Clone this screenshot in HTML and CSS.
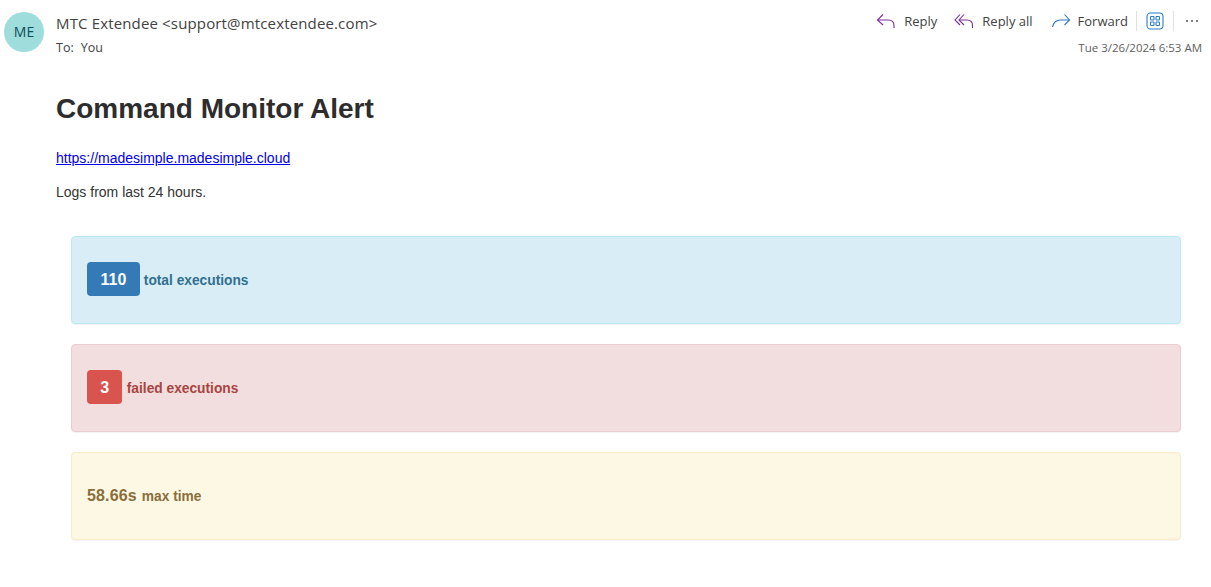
FILE: index.html
```html
<!DOCTYPE html>
<html lang="en">
<head>
    <meta charset="UTF-8">
    <title>Command Monitor Alert</title>
    <link rel="stylesheet" href="styles.css">
</head>
<body>

<!-- Message header -->
<header class="mail-header">
    <div class="avatar">ME</div>
    <div class="sender">
        <div class="sender-name">MTC Extendee &lt;support@mtcextendee.com&gt;</div>
        <div class="sender-to"><span class="to-label">To:</span>You</div>
    </div>
    <div class="header-right">
        <div class="actions">
            <button class="action">
                <svg class="action-icon" viewBox="0 0 20 20" fill="none" stroke="#7b2d9b" stroke-width="1.1">
                    <path d="M7 3.500 1.500 9l5.500 5"/>
                    <path d="M1.500 9H12c3.500 0 6 2 6 5.500V17"/>
                </svg>
                Reply
            </button>
            <button class="action action-all">
                <svg class="action-icon" viewBox="0 0 20 20" fill="none" stroke="#7b2d9b" stroke-width="1.1">
                    <path d="M6 3.500 1 9l5 5"/>
                    <path d="M10 3.500 5 9l5 5"/>
                    <path d="M5 9h8c3.500 0 5.500 2 5.500 5.500V17"/>
                </svg>
                Reply all
            </button>
            <button class="action action-last">
                <svg class="action-icon" viewBox="0 0 20 20" fill="none" stroke="#2f74c6" stroke-width="1.1">
                    <path d="M13.500 3.500 18.500 9l-5 5"/>
                    <path d="M18.500 9H9.500C5 9 2.500 11.500 1.500 16"/>
                </svg>
                Forward
            </button>
            <span class="divider"></span>
            <button class="icon-btn">
                <svg width="18" height="18" viewBox="0 0 18 18" fill="none" stroke="#2b7cc4" stroke-width="1.1">
                    <rect x="1" y="1" width="16" height="16" rx="3.500"/>
                    <rect x="4.500" y="4.500" width="3.500" height="3.500" rx=".7"/>
                    <rect x="10" y="4.500" width="3.500" height="3.500" rx=".7"/>
                    <rect x="4.500" y="10" width="3.500" height="3.500" rx=".7"/>
                    <rect x="10" y="10" width="3.500" height="3.500" rx=".7"/>
                </svg>
            </button>
            <span class="divider"></span>
            <button class="icon-btn more">
                <svg width="14" height="4" viewBox="0 0 14 4" fill="#616161">
                    <circle cx="2" cy="2" r="1.100"/>
                    <circle cx="7" cy="2" r="1.100"/>
                    <circle cx="12" cy="2" r="1.100"/>
                </svg>
            </button>
        </div>
        <div class="mail-date">Tue 3/26/2024 6:53 AM</div>
    </div>
</header>

<!-- Message body -->
<main class="mail-body">
    <h1>Command Monitor Alert</h1>
    <p class="site-link"><a href="https://madesimple.madesimple.cloud">https://madesimple.madesimple.cloud</a></p>
    <p class="intro">Logs from last 24 hours.</p>

    <div class="alerts">
        <div class="alert alert-info">
            <span class="badge badge-blue">110</span>
            <span class="alert-text">total executions</span>
        </div>
        <div class="alert alert-danger">
            <span class="badge badge-red">3</span>
            <span class="alert-text">failed executions</span>
        </div>
        <div class="alert alert-warning">
            <span class="alert-value">58.66s</span>
            <span class="alert-text">max time</span>
        </div>
    </div>
</main>

</body>
</html>
```

FILE: styles.css
```css
body {
    font-family: "Open Sans", "Noto Sans", sans-serif;
    background-color: #fff;
    margin: 0;
    padding: 0;
    color: #424242;
}
.mail-header {
    display: flex;
    padding: 12px 9px 0 4px;
}
.avatar {
    width: 40px;
    height: 40px;
    border-radius: 50%;
    background-color: #9fdcdc;
    color: #0e4d58;
    font-size: 14px;
    line-height: 40px;
    text-align: center;
    flex-shrink: 0;
}
.sender {
    margin-left: 12px;
    flex: 1;
}
.sender-name {
    font-size: 15px;
    letter-spacing: 0.15px;
    line-height: 24px;
    margin-top: -1px;
}
.sender-to {
    font-size: 12.500px;
    line-height: 22px;
    margin-top: 2px;
}
.to-label {
    margin-right: 7px;
}
.header-right {
    display: flex;
    flex-direction: column;
    align-items: flex-end;
    margin-top: -5px;
}
.actions {
    display: flex;
    align-items: center;
    height: 28px;
}
.action, .icon-btn {
    display: flex;
    align-items: center;
    background: none;
    border: none;
    padding: 0;
    font-family: inherit;
    font-size: 13px;
    color: #424242;
}
.action {
    margin-right: 17px;
}
.action-all {
    margin-right: 18px;
}
.action-last {
    margin-right: 8px;
}
.action-icon {
    width: 20px;
    height: 20px;
    margin-right: 8px;
}
.action-last .action-icon {
    margin-right: 7px;
}
.icon-btn {
    margin: 0 9px;
}
.icon-btn.more {
    margin-right: 3px;
    margin-left: 11px;
}
.divider {
    width: 1px;
    height: 20px;
    background-color: #e0e0e0;
}
.mail-date {
    font-size: 11.500px;
    line-height: 16px;
    margin-top: 5px;
    color: #616161;
}
.mail-body {
    padding: 0 30px 0 56px;
    font-family: "Liberation Sans", Arial, sans-serif;
    color: #333;
}
h1 {
    font-size: 28px;
    line-height: 31px;
    margin: 34px 0 0;
    color: #2d2d2d;
}
p {
    font-size: 14px;
    line-height: 20px;
    margin: 0;
}
.site-link {
    margin-top: 24px;
}
.site-link a {
    color: #0000ee;
}
.intro {
    margin-top: 14px;
}
.alerts {
    margin: 34px 0 0 15px;
}
.alert {
    display: flex;
    align-items: center;
    height: 88px;
    box-sizing: border-box;
    padding: 0 15px;
    margin-bottom: 20px;
    border: 1px solid transparent;
    border-radius: 4px;
    box-shadow: 0 1px 1px rgba(0, 0, 0, 0.05);
    font-size: 13.750px;
    font-weight: bold;
}
.alert-info {
    background-color: #d9edf7;
    border-color: #bce8f1;
    color: #31708f;
}
.alert-danger {
    background-color: #f2dede;
    border-color: #ebccd1;
    color: #a94442;
}
.alert-warning {
    background-color: #fcf8e3;
    border-color: #faebcc;
    color: #8a6d3b;
}
.badge {
    display: block;
    height: 34px;
    line-height: 35px;
    padding: 0 13.200px;
    margin: 0 4.500px 2px 0;
    border-radius: 4px;
    color: #fff;
    font-size: 16px;
}
.badge-blue {
    background-color: #337ab7;
    padding: 0 13.500px;
    margin-right: 4px;
}
.badge-red {
    background-color: #d9534f;
}
.alert-value {
    font-size: 16px;
    letter-spacing: 0.15px;
    margin-right: 5px;
}
```
